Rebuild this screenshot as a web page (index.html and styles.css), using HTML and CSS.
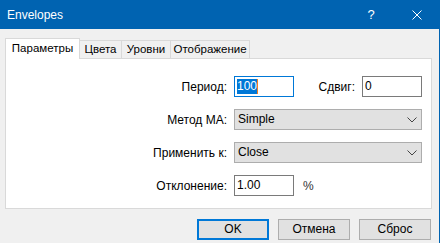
FILE: index.html
```html
<!DOCTYPE html>
<html lang="ru">

<head>
    <meta charset="UTF-8" />
    <title>Envelopes</title>
    <link rel="stylesheet" href="styles.css">
</head>

<body>
    <div class="window">
        <div class="titlebar">
            <span class="title">Envelopes</span>
            <span class="caption-btn">?</span>
            <span class="caption-btn">
                <svg width="10" height="10" viewBox="0 0 10 10">
                    <path d="M0.5 0.5 L9.5 9.5 M9.5 0.5 L0.5 9.5" stroke="#fff" stroke-width="1" fill="none" />
                </svg>
            </span>
        </div>

        <div class="content">
            <div class="tabs">
                <div class="tab active">Параметры</div>
                <div class="tab tab-colors">Цвета</div>
                <div class="tab tab-levels">Уровни</div>
                <div class="tab tab-display">Отображение</div>
            </div>

            <div class="panel">
                <div class="form">
                    <label>Период:</label>
                    <div class="row-inline">
                        <div class="field focused"><span class="selected">100</span><span class="caret"></span></div>
                        <label class="shift-label">Сдвиг:</label>
                        <div class="field">0</div>
                    </div>

                    <label>Метод MA:</label>
                    <div class="select">Simple
                        <svg class="chevron" width="10" height="6" viewBox="0 0 10 6">
                            <path d="M0.5 0.5 L5 5 L9.5 0.5" stroke="#444" stroke-width="1" fill="none" />
                        </svg>
                    </div>

                    <label>Применить к:</label>
                    <div class="select">Close
                        <svg class="chevron" width="10" height="6" viewBox="0 0 10 6">
                            <path d="M0.5 0.5 L5 5 L9.5 0.5" stroke="#444" stroke-width="1" fill="none" />
                        </svg>
                    </div>

                    <label>Отклонение:</label>
                    <div class="row-inline">
                        <div class="field">1.00</div>
                        <span class="percent">%</span>
                    </div>
                </div>
            </div>

            <div class="buttons">
                <div class="button default">OK</div>
                <div class="button">Отмена</div>
                <div class="button">Сброс</div>
            </div>
        </div>
    </div>
</body>

</html>
```

FILE: styles.css
```css
body {
    margin: 0;
    font-family: "Liberation Sans", Arial, sans-serif;
    font-size: 12px;
    color: #000;
    background-color: #f0f0f0;
}

.window {
    width: 440px;
    height: 243px;
    box-sizing: border-box;
    border-right: 1px solid #0063b1;
    background-color: #f0f0f0;
}

.titlebar {
    height: 29px;
    display: flex;
    align-items: center;
    background-color: #0063b1;
    color: #fff;
    margin-right: -1px;
}

.title {
    flex: 1;
    padding-left: 7px;
    font-size: 12px;
}

.caption-btn {
    width: 46px;
    height: 29px;
    display: flex;
    align-items: center;
    justify-content: center;
    font-size: 13px;
}

.content {
    padding: 8px 7px 0 5px;
}

.tabs {
    display: flex;
    align-items: flex-end;
    height: 21px;
    position: relative;
    z-index: 1;
}

.tab {
    box-sizing: border-box;
    height: 18px;
    border: 1px solid #d9d9d9;
    border-bottom: none;
    background-color: #f0f0f0;
    text-align: center;
    line-height: 17px;
    font-size: 11.5px;
    margin-left: -1px;
}

.tab.active {
    margin-left: 0;
    width: 75px;
    height: 21px;
    line-height: 19px;
    background-color: #fff;
    margin-bottom: -1px;
    position: relative;
    z-index: 2;
}

.tab-colors {
    width: 43px;
}

.tab-levels {
    width: 50px;
}

.tab-display {
    width: 80px;
}

.panel {
    box-sizing: border-box;
    height: 151px;
    border: 1px solid #d9d9d9;
    background-color: #fff;
    padding-top: 17px;
}

.form {
    display: grid;
    grid-template-columns: 221px 188px;
    grid-template-rows: repeat(4, 21px);
    column-gap: 7px;
    row-gap: 12px;
}

.form label {
    text-align: right;
    align-self: center;
}

.row-inline {
    display: flex;
    align-items: center;
}

.field {
    box-sizing: border-box;
    width: 60px;
    height: 21px;
    border: 1px solid #7a7a7a;
    background-color: #fff;
    padding-left: 2px;
    line-height: 19px;
    display: flex;
    align-items: center;
}

.field.focused {
    border-color: #0078d7;
}

.selected {
    background-color: #0078d7;
    color: #fff;
    line-height: 15px;
}

.caret {
    width: 1px;
    height: 15px;
    background-color: #f08020;
}

.row-inline .shift-label {
    width: 61px;
    text-align: right;
    margin-right: 7px;
}

.percent {
    margin-left: 9px;
    color: #333;
}

.select {
    box-sizing: border-box;
    height: 21px;
    border: 1px solid #adadad;
    background-color: #e1e1e1;
    padding-left: 3px;
    line-height: 19px;
    display: flex;
    align-items: center;
    justify-content: space-between;
}

.chevron {
    margin-right: 4px;
}

.buttons {
    display: flex;
    justify-content: flex-end;
    gap: 9px;
    margin-top: 10px;
    margin-right: 1px;
}

.button {
    box-sizing: border-box;
    width: 72px;
    height: 21px;
    border: 1px solid #adadad;
    background-color: #e1e1e1;
    text-align: center;
    line-height: 19px;
}

.button.default {
    border: 2px solid #0078d7;
    line-height: 17px;
}
```
